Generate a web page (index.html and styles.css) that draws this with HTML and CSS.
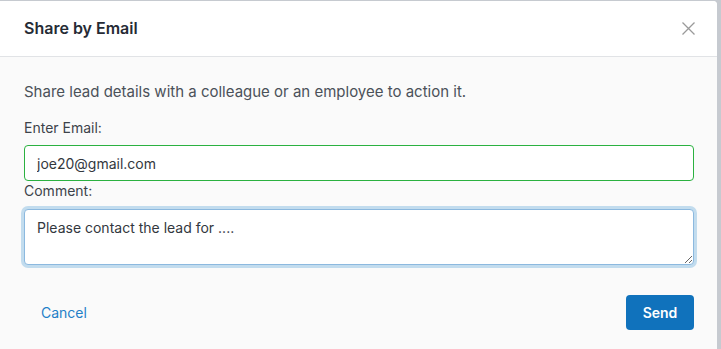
FILE: index.html
```html
<!DOCTYPE html>
<html lang="en">
<head>
  <meta charset="UTF-8">
  <title>Share by Email</title>
  <link rel="stylesheet" href="styles.css">
</head>
<body>

  <div class="modal">
    <div class="modal-header">
      <h2>Share by Email</h2>
      <button class="close" aria-label="Close">
        <svg width="13" height="13" viewBox="0 0 13 13"><path d="M0.5 0.5L12.5 12.5M12.5 0.5L0.5 12.5" stroke="#9a9a9a" stroke-width="1.3" fill="none"/></svg>
      </button>
    </div>

    <div class="modal-body">
      <p class="intro">Share lead details with a colleague or an employee to action it.</p>
      <label class="lbl" for="email">Enter Email:</label>
      <input id="email" class="field field-ok" type="text" value="joe20@gmail.com">
      <label class="lbl lbl-tight" for="comment">Comment:</label>
      <textarea id="comment" class="field field-focus">Please contact the lead for ....</textarea>
    </div>

    <div class="modal-footer">
      <a class="cancel" href="#">Cancel</a>
      <button class="send">Send</button>
    </div>
  </div>

</body>
</html>
```

FILE: styles.css
```css
*,*::before,*::after{margin:0;padding:0;box-sizing:border-box}
html,body{
  height:100%;
  overflow:hidden;
  background:#c6cad0;
  font-family:Inter,"Noto Sans",Arial,sans-serif;
}

.modal{
  width:717px;
  margin-top:1px;
  background:#fafafa;
  border-top-right-radius:4px;
}

/* header */
.modal-header{
  height:56px;
  display:flex;
  align-items:center;
  justify-content:space-between;
  padding:0 24px 0 24px;
  background:#fff;
  border-bottom:1px solid #e1e3e6;
  border-top-right-radius:4px;
}
.modal-header h2{
  font-size:16px;
  font-weight:600;
  color:#262b35;
  margin-top:-1px;
}
.close{
  background:none;border:none;
  width:13px;height:13px;
  margin-right:-2px;
  display:flex;
}

/* body */
.modal-body{
  padding:25px 23px 0 24px;
  display:flex;
  flex-direction:column;
}
.intro{
  font-size:15px;
  line-height:20px;
  color:#4b5159;
  margin-bottom:16px;
}
.lbl{
  font-size:14px;
  line-height:20px;
  color:#3d434a;
  margin-bottom:7px;
}
.lbl-tight{margin-bottom:8px}
.field{
  width:670px;
  font-family:inherit;
  font-size:14px;
  color:#33383e;
  background:#fff;
  border-radius:4px;
  padding:0 12px;
}
.field-ok{
  height:36px;
  border:1px solid #2bb140;
}
.field-focus{
  height:56px;
  padding:8px 12px;
  line-height:20px;
  border:1px solid #8cb9df;
  box-shadow:0 0 0 3px #c2dcee;
  outline:none;
  resize:vertical;
}

/* footer */
.modal-footer{
  display:flex;
  align-items:center;
  justify-content:space-between;
  padding:30px 23px 40px 41px;
}
.cancel{
  font-size:14px;
  color:#1f80c8;
  text-decoration:none;
}
.send{
  width:68px;
  height:35px;
  border:none;
  border-radius:4px;
  background:#1072bc;
  color:#fff;
  font-family:inherit;
  font-size:14px;
  font-weight:600;
}
```
